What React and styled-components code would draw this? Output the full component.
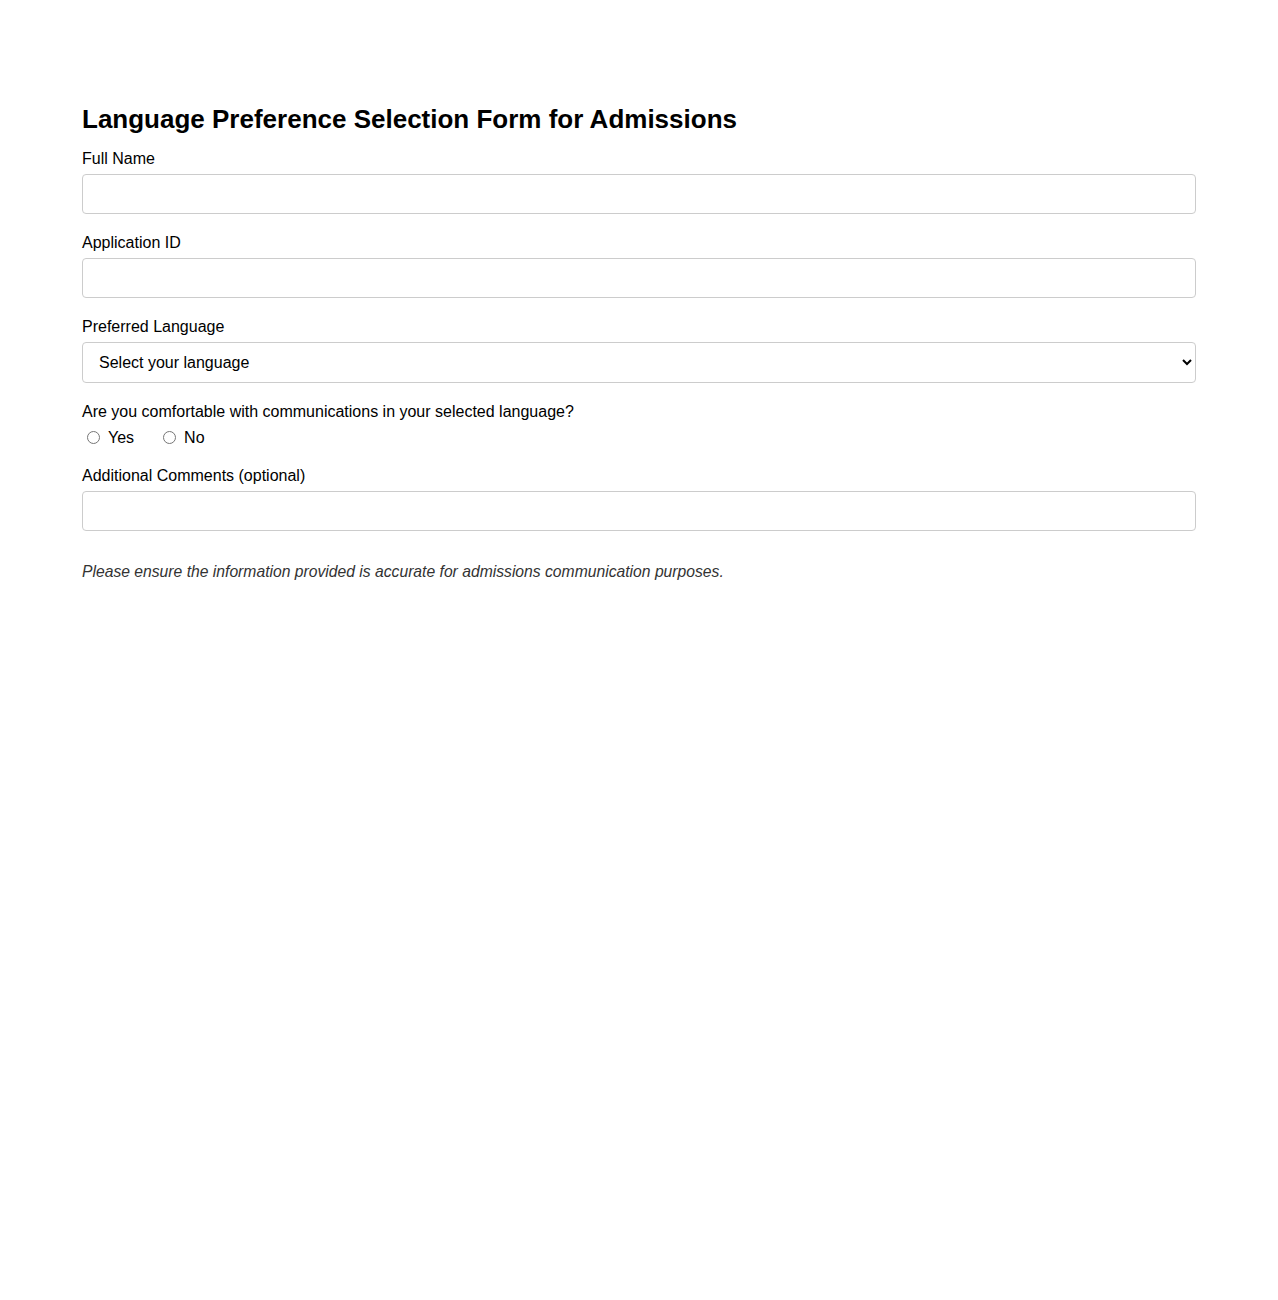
import React from 'react';
import styled, { createGlobalStyle } from 'styled-components';

const GlobalStyle = createGlobalStyle`
  body {
    margin: 0;
    background: #fff;
    font-family: "Liberation Sans", Arial, sans-serif;
    color: #000;
  }
`;

const Page = styled.div`
  padding: 104px 82px 40px 82px;
`;

const Title = styled.h1`
  font-size: 26px;
  font-weight: 700;
  line-height: 30px;
  margin: 0 0 16px 0;
`;

const Group = styled.div`
  margin-bottom: 20px;
`;

const Label = styled.label`
  display: block;
  font-size: 16px;
  line-height: 18px;
  margin-bottom: 6px;
`;

const TextInput = styled.input`
  display: block;
  box-sizing: border-box;
  width: 100%;
  height: 40px;
  padding: 10px;
  font-size: 16px;
  font-family: inherit;
  border: 1px solid #ccc;
  border-radius: 4px;
  background: #fff;
`;

const Select = styled.select`
  display: block;
  box-sizing: border-box;
  width: 100%;
  height: 41px;
  padding: 10px 12px;
  font-size: 16px;
  font-family: inherit;
  color: #000;
  border: 1px solid #ccc;
  border-radius: 4px;
  background: #fff;
`;

const RadioRow = styled.div`
  display: flex;
  align-items: center;
  padding-top: 2px;
  font-size: 16px;
  line-height: 18px;
`;

const RadioLabel = styled.label`
  display: inline-flex;
  align-items: center;
  margin-right: 24px;
  input {
    margin: -1px 8px 0 5px;
  }
`;

const Note = styled.p`
  font-size: 15.7px;
  font-style: italic;
  color: #333;
  margin: 32px 0 0 0;
`;

export default function App() {
  return (
    <>
      <GlobalStyle />
      <Page>
        <Title>Language Preference Selection Form for Admissions</Title>
        <Group>
          <Label htmlFor="fullName">Full Name</Label>
          <TextInput id="fullName" type="text" />
        </Group>
        <Group>
          <Label htmlFor="appId">Application ID</Label>
          <TextInput id="appId" type="text" />
        </Group>
        <Group>
          <Label htmlFor="lang">Preferred Language</Label>
          <Select id="lang" defaultValue="">
            <option value="">Select your language</option>
            <option value="en">English</option>
            <option value="es">Spanish</option>
            <option value="fr">French</option>
          </Select>
        </Group>
        <Group>
          <Label>Are you comfortable with communications in your selected language?</Label>
          <RadioRow>
            <RadioLabel><input type="radio" name="comfort" value="yes" />Yes</RadioLabel>
            <RadioLabel><input type="radio" name="comfort" value="no" />No</RadioLabel>
          </RadioRow>
        </Group>
        <Group>
          <Label htmlFor="comments">Additional Comments (optional)</Label>
          <TextInput id="comments" type="text" />
        </Group>
        <Note>Please ensure the information provided is accurate for admissions communication purposes.</Note>
      </Page>
    </>
  );
}
